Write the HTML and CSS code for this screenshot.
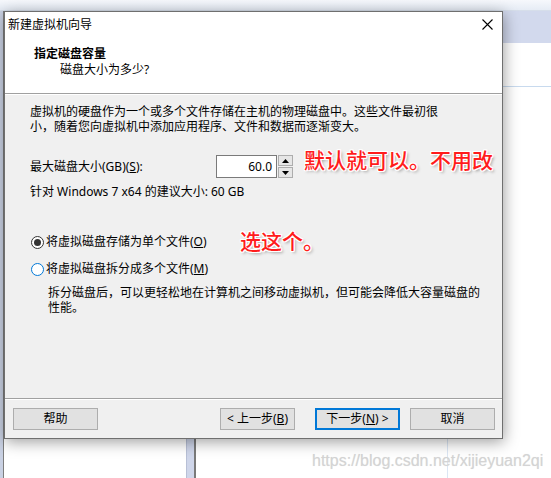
FILE: index.html
```html
<!DOCTYPE html>
<html lang="zh-CN">
<head>
<meta charset="utf-8">
<title>新建虚拟机向导</title>
<link rel="stylesheet" href="styles.css">
</head>
<body>
<div class="desktop">
  <div class="top-strip"></div>
  <div class="left-strip"></div>
  <div class="right-pane">
    <div class="rp-header"></div>
    <div class="rp-line"></div>
  </div>
  <div class="bottom-bar"></div>
  <div class="bottom-vline"></div>
  <div class="watermark">https://blog.csdn.net/xijieyuan2qi</div>
</div>

<div class="dialog">
  <div class="titlebar">
    <span class="title">新建虚拟机向导</span>
    <svg class="close" width="11" height="11" viewBox="0 0 11 11"><path d="M0.5 0.5 L10.5 10.5 M10.5 0.5 L0.5 10.5" stroke="#000" stroke-width="1.1" fill="none"/></svg>
  </div>
  <div class="header">
    <div class="h-title">指定磁盘容量</div>
    <div class="h-sub">磁盘大小为多少?</div>
  </div>
  <div class="body">
    <p class="para">虚拟机的硬盘作为一个或多个文件存储在主机的物理磁盘中。这些文件最初很小，随着您向虚拟机中添加应用程序、文件和数据而逐渐变大。</p>
    <div class="size-row">
      <span class="label">最大磁盘大小(GB)(<u>S</u>):</span>
      <div class="input">60.0</div>
      <div class="spin">
        <div class="spin-btn"><svg width="7" height="4" viewBox="0 0 7 4"><path d="M3.5 0 L7 4 L0 4 Z" fill="#000"/></svg></div>
        <div class="spin-btn"><svg width="7" height="4" viewBox="0 0 7 4"><path d="M0 0 L7 0 L3.5 4 Z" fill="#000"/></svg></div>
      </div>
    </div>
    <div class="rec">针对 Windows 7 x64 的建议大小: 60 GB</div>
    <div class="radio-row first">
      <span class="radio checked"></span>
      <span>将虚拟磁盘存储为单个文件(<u>O</u>)</span>
    </div>
    <div class="radio-row second">
      <span class="radio focus"></span>
      <span>将虚拟磁盘拆分成多个文件(<u>M</u>)</span>
    </div>
    <p class="desc">拆分磁盘后，可以更轻松地在计算机之间移动虚拟机，但可能会降低大容量磁盘的性能。</p>
  </div>
  <div class="footer">
    <button class="btn">帮助</button>
    <div class="spacer"></div>
    <button class="btn prev">&lt; 上一步(<u>B</u>)</button>
    <button class="btn primary">下一步(<u>N</u>) &gt;</button>
    <button class="btn cancel">取消</button>
  </div>
</div>

<div class="note note1">默认就可以。不用改</div>
<div class="note note2">选这个。</div>
</body>
</html>
```

FILE: styles.css
```css
html, body {
  margin: 0;
  padding: 0;
}
body {
  width: 551px;
  height: 478px;
  position: relative;
  overflow: hidden;
  background: #ffffff;
  font-family: "Noto Sans", "Noto Sans CJK SC", sans-serif;
  font-size: 12px;
  color: #000;
}

/* background desktop windows */
.desktop {
  position: absolute;
  inset: 0;
}
.top-strip {
  position: absolute;
  left: 0;
  top: 0;
  width: 551px;
  height: 11px;
  background: linear-gradient(#f6f8fc, #e6ecf5);
  border-bottom: 1px solid #d6deea;
  box-sizing: border-box;
}
.left-strip {
  position: absolute;
  left: 0;
  top: 11px;
  width: 4px;
  height: 467px;
  background: #c9d1e3;
  border-right: 1px solid #7d7d7d;
  box-sizing: border-box;
}
.right-pane {
  position: absolute;
  left: 503px;
  top: 11px;
  width: 48px;
  height: 467px;
  background: #fff;
}
.rp-header {
  height: 32px;
  background: #d2d9ed;
}
.rp-line {
  margin-top: 43px;
  height: 1px;
  background: #c8daee;
}
.bottom-bar {
  position: absolute;
  left: 186px;
  top: 438px;
  width: 10px;
  height: 40px;
  background: #cfd6ea;
  border-right: 2px solid #7a7a7a;
  border-left: 1px solid #b8c0d6;
  box-sizing: border-box;
}
.bottom-vline {
  position: absolute;
  left: 447px;
  top: 438px;
  width: 1px;
  height: 40px;
  background: #dbe6f4;
}
.watermark {
  position: absolute;
  left: 312px;
  top: 451px;
  font-family: "Liberation Sans", Arial, sans-serif;
  font-size: 16px;
  line-height: 20px;
  color: #d4d4d4;
  text-shadow: 0 0 1px #e6e6e6;
  white-space: nowrap;
}

/* dialog window */
.dialog {
  position: absolute;
  left: 4px;
  top: 11px;
  width: 499px;
  height: 428px;
  box-sizing: border-box;
  border: 1px solid #6f6f6f;
  background: #f0f0f0;
  box-shadow: 1px 3px 14px rgba(0, 0, 0, 0.38);
  display: flex;
  flex-direction: column;
}
.titlebar {
  height: 24px;
  background: #fff;
  display: flex;
  align-items: center;
  justify-content: space-between;
  padding-left: 3px;
  line-height: 24px;
}
.title {
  font-family: "Noto Sans CJK SC", sans-serif;
}
.close {
  margin-right: 9px;
  display: block;
}
.header {
  height: 58px;
  box-sizing: border-box;
  background: #fff;
  border-bottom: 1px solid #a0a0a0;
  padding: 8px 0 0 29px;
}
.h-title {
  font-weight: bold;
  line-height: 17px;
  font-family: "Noto Sans CJK SC", sans-serif;
}
.h-sub {
  line-height: 17px;
  padding-left: 26px;
}

.body {
  flex: 1;
  border-top: 1px solid #ffffff;
  padding: 9px 0 0 25px;
}
.para {
  margin: 0;
  width: 410px;
  line-height: 15px;
}
.size-row {
  display: flex;
  align-items: center;
  height: 23px;
  margin-top: 21px;
}
.label {
  width: 186px;
  line-height: 15px;
}
.input {
  width: 61px;
  height: 23px;
  box-sizing: border-box;
  border: 1px solid #7a7a7a;
  background: #fff;
  text-align: right;
  padding-right: 4px;
  line-height: 21px;
}
.spin {
  margin-left: 1px;
  width: 15px;
  height: 23px;
  display: flex;
  flex-direction: column;
  gap: 1px;
}
.spin-btn {
  flex: 1;
  box-sizing: border-box;
  border: 1px solid #adadad;
  background: #e6e6e6;
  display: flex;
  align-items: center;
  justify-content: center;
}
.spin-btn svg {
  display: block;
}
.rec {
  margin-top: 6px;
  line-height: 15px;
}
.radio-row {
  display: flex;
  align-items: center;
  height: 16px;
  line-height: 16px;
}
.radio-row.first {
  margin-top: 35px;
}
.radio-row.second {
  margin-top: 11px;
}
.radio {
  width: 13px;
  height: 13px;
  box-sizing: border-box;
  border-radius: 50%;
  border: 1px solid #333;
  background: #fff;
  margin-left: 1px;
  margin-right: 2px;
  display: flex;
  align-items: center;
  justify-content: center;
}
.radio.checked::after {
  content: "";
  width: 7px;
  height: 7px;
  border-radius: 50%;
  background: #333;
}
.radio.focus {
  border-color: #0078d7;
}
.desc {
  margin: 8px 0 0 18px;
  width: 436px;
  line-height: 15px;
}

.footer {
  height: 40px;
  box-sizing: border-box;
  border-top: 1px solid #a0a0a0;
  box-shadow: inset 0 1px 0 #ffffff;
  padding: 9px 7px 0 8px;
  display: flex;
  align-items: flex-start;
}
.spacer {
  flex: 1;
}
.btn {
  width: 85px;
  height: 22px;
  box-sizing: border-box;
  border: 1px solid #adadad;
  background: #e1e1e1;
  font-family: "Noto Sans", "Noto Sans CJK SC", sans-serif;
  font-size: 12px;
  color: #000;
  padding: 0;
  line-height: 20px;
  text-align: center;
}
.btn.prev {
  width: 75px;
  margin-right: 20px;
}
.btn.primary {
  border: 2px solid #0078d7;
  line-height: 18px;
  margin-right: 10px;
}

/* red annotations drawn over the screenshot */
.note {
  position: absolute;
  font-family: "Noto Sans CJK SC", sans-serif;
  font-size: 21px;
  font-weight: 500;
  line-height: 24px;
  color: #ff1c1c;
  white-space: nowrap;
  text-shadow:
    1px 0 0 #fff, -1px 0 0 #fff, 0 1px 0 #fff, 0 -1px 0 #fff,
    1px 1px 0 #fff, -1px -1px 0 #fff, 1px -1px 0 #fff, -1px 1px 0 #fff,
    2px 2px 3px rgba(0, 0, 0, 0.35);
}
.note1 {
  left: 304px;
  top: 147px;
}
.note2 {
  left: 240px;
  top: 228px;
}
```
